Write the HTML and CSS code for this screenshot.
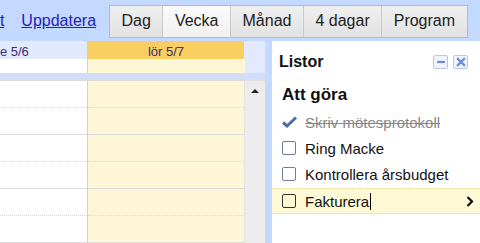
FILE: index.html
```html
<!DOCTYPE html>
<html lang="sv">
<head>
  <meta charset="UTF-8" />
  <meta name="viewport" content="width=device-width, initial-scale=1" />
  <title>Kalender</title>
  <link rel="stylesheet" href="styles.css">
</head>
<body>
  <div class="topbar">
    <a href="#" class="cut">Skriv ut</a>
    <a href="#">Uppdatera</a>
    <div class="views">
      <button>Dag</button>
      <button class="active">Vecka</button>
      <button>Månad</button>
      <button>4 dagar</button>
      <button>Program</button>
    </div>
  </div>

  <div class="main">
    <div class="calendar">
      <div class="row head">
        <div class="day"><span class="clip">fre 5/6</span></div>
        <div class="day today">lör 5/7</div>
        <div class="gutter"></div>
      </div>
      <div class="row allday">
        <div class="day"></div>
        <div class="day today"></div>
        <div class="gutter"></div>
      </div>
      <div class="band"></div>
      <div class="row grid">
        <div class="day">
          <div class="hour"></div>
          <div class="hour"></div>
          <div class="hour"></div>
        </div>
        <div class="day today">
          <div class="hour"></div>
          <div class="hour"></div>
          <div class="hour"></div>
        </div>
        <div class="scrollbar"><span class="arrow"></span></div>
      </div>
    </div>

    <div class="panel">
      <div class="panel-head">
        <h2>Listor</h2>
        <div class="tools">
          <span class="tool">
            <svg width="9" height="9" viewBox="0 0 9 9"><rect x="1" y="3.5" width="7" height="2" fill="#6d8bd6"/></svg>
          </span>
          <span class="tool">
            <svg width="9" height="9" viewBox="0 0 9 9"><path d="M1 1L8 8M8 1L1 8" stroke="#6d8bd6" stroke-width="2"/></svg>
          </span>
        </div>
      </div>
      <h3>Att göra</h3>
      <ul class="tasks">
        <li class="done">
          <svg class="check" width="15" height="12" viewBox="0 0 15 12"><path d="M1 6.5L5 10L14 1.5" fill="none" stroke="#4d6ea8" stroke-width="3"/></svg>
          <span>Skriv mötesprotokoll</span>
        </li>
        <li><span class="box"></span><span>Ring Macke</span></li>
        <li><span class="box"></span><span>Kontrollera årsbudget</span></li>
        <li class="editing">
          <span class="box"></span><span class="text">Fakturera</span><span class="caret"></span>
          <svg class="more" width="8" height="11" viewBox="0 0 8 11"><path d="M1.5 1L6 5.5L1.5 10" fill="none" stroke="#111" stroke-width="2.2"/></svg>
        </li>
      </ul>
    </div>
  </div>
</body>
</html>
```

FILE: styles.css
```css
body {
  font-family: "Liberation Sans", Arial, sans-serif;
  margin: 0;
  width: 480px;
  height: 243px;
  overflow: hidden;
  background-color: #c3d9ff;
}

.topbar {
  height: 41px;
  display: flex;
  align-items: center;
  overflow: hidden;
}

.topbar a {
  color: #2323b8;
  font-size: 16px;
  margin-right: 13px;
  white-space: nowrap;
}

.topbar a.cut {
  margin-left: -49px;
  margin-right: 17px;
}

.views {
  display: flex;
  height: 31px;
  margin-top: 1px;
  border: 1px solid #b9b9b9;
}

.views button {
  font-family: inherit;
  font-size: 16px;
  color: #222;
  padding: 0 11.5px;
  margin: 0;
  border: 0;
  border-left: 1px solid #c9c9c9;
  background: linear-gradient(#efefef, #e2e2e2);
}

.views button:first-child {
  border-left: 0;
}

.views button.active {
  background: linear-gradient(#fafafa, #f1f1f1);
}

.main {
  display: flex;
  height: 202px;
}

.calendar {
  width: 265px;
  background-color: #e3e9ff;
  display: flex;
  flex-direction: column;
}

.row {
  display: flex;
}

.day {
  width: 87px;
  overflow: hidden;
}

.day.today {
  width: 157px;
  border-left: 1px solid #f0d17c;
  background-color: #fff6d8;
}

.gutter {
  width: 20px;
}

.head {
  height: 22px;
  font-size: 13px;
  color: #3a2c76;
}

.head .day {
  padding-top: 3px;
  box-sizing: border-box;
  white-space: nowrap;
}

.head .clip {
  display: inline-block;
  margin-left: -8px;
}

.head .day.today {
  background-color: #f9cf62;
  border-left-color: #f9cf62;
  text-align: center;
}

.allday {
  height: 20px;
}

.allday .day {
  background-color: #fff;
}

.allday .day.today {
  background-color: #fff6d8;
}

.band {
  height: 10px;
  background-color: #d2ddf9;
}

.grid {
  flex: 1;
  border-top: 1px solid #dcdcdc;
  background-color: #fff;
}

.hour {
  height: 53px;
  border-bottom: 1px solid #dcdcdc;
  position: relative;
}

.hour::after {
  content: "";
  position: absolute;
  left: 0;
  right: 0;
  top: 26px;
  border-top: 1px dotted #d8d8d8;
}

.scrollbar {
  width: 20px;
  background-color: #ececec;
  border-left: 1px solid #e2e2e2;
  display: flex;
  justify-content: center;
}

.arrow {
  margin-top: 8px;
  width: 0;
  height: 0;
  border-left: 4px solid transparent;
  border-right: 4px solid transparent;
  border-bottom: 4px solid #222;
}

.panel {
  flex: 1;
  margin-left: 7px;
  background-color: #fff;
  padding-top: 11px;
}

.panel-head {
  display: flex;
  justify-content: space-between;
  align-items: center;
  padding: 0 12px 0 7px;
  height: 20px;
}

.panel-head h2 {
  margin: 0;
  font-size: 16px;
  color: #111;
}

.tools {
  display: flex;
  gap: 5px;
}

.tool {
  width: 13px;
  height: 12px;
  border: 1px solid #b7c6ea;
  border-radius: 2px;
  background-color: #f1f4fc;
  display: flex;
  align-items: center;
  justify-content: center;
}

.tool svg {
  width: 10px;
  height: 10px;
}

h3 {
  margin: 12px 0 0 10px;
  font-size: 17px;
  line-height: 22px;
  color: #111;
}

.tasks {
  list-style: none;
  margin: 3px 0 0;
  padding: 0;
}

.tasks li {
  height: 26px;
  display: flex;
  align-items: center;
  padding-left: 10px;
  font-size: 15px;
  color: #111;
}

.box {
  width: 12px;
  height: 12px;
  border: 1px solid #6e7c98;
  border-radius: 2px;
  margin-right: 9px;
}

.check {
  margin-right: 8px;
}

.done span {
  color: #888;
  text-decoration: line-through;
}

.tasks li.editing {
  background-color: #fff9d5;
  border-top: 1px solid #f1e6a8;
  border-bottom: 1px solid #f1e6a8;
  height: 24px;
  margin-top: 1px;
}

.editing .box {
  border-color: #333;
}

.caret {
  width: 1px;
  height: 17px;
  background-color: #000;
  margin-left: 1px;
}

.more {
  margin-left: auto;
  margin-right: 6px;
}
```
